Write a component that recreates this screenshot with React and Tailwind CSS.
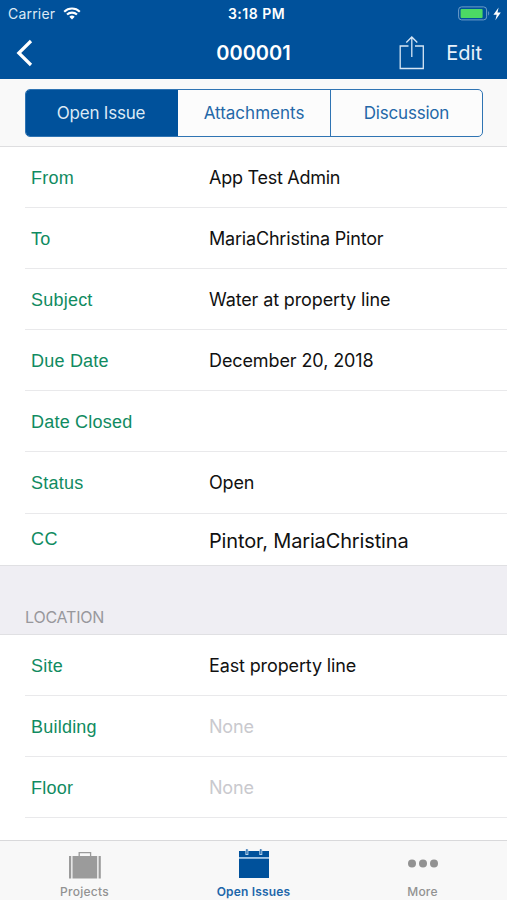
const details = [
  { label: 'From', value: 'App Test Admin', spacing: 'tracking-[-0.26px]' },
  { label: 'To', value: 'MariaChristina Pintor', spacing: 'tracking-[-0.19px]' },
  { label: 'Subject', value: 'Water at property line', spacing: 'tracking-[-0.13px]' },
  { label: 'Due Date', value: 'December 20, 2018', spacing: 'tracking-[-0.1px]' },
  { label: 'Date Closed', value: '', spacing: '' },
  { label: 'Status', value: 'Open', spacing: 'tracking-[-0.2px]' },
]

const location = [
  { label: 'Site', value: 'East property line', spacing: 'tracking-[-0.13px]' },
  { label: 'Building' },
  { label: 'Floor' },
]

function WifiIcon() {
  return (
    <svg width="18" height="13" viewBox="0 0 18 13" fill="none" stroke="white" strokeWidth="2.1">
      <path d="M1.2 4.7a11.2 11.2 0 0 1 15.6 0" />
      <path d="M4 7.6a7.2 7.2 0 0 1 10 0" />
      <path d="M9 12.6 6.3 9.8a3.9 3.9 0 0 1 5.4 0z" fill="white" stroke="none" />
    </svg>
  )
}

function BatteryIcon() {
  return (
    <svg width="44" height="16" viewBox="0 0 44 16">
      <rect x="0.6" y="0.9" width="28" height="13" rx="3" fill="none" stroke="#6e9dc9" strokeWidth="1" />
      <rect x="2.6" y="2.9" width="22" height="9" rx="1" fill="#4cd964" />
      <path d="M30.2 5.3c1.3.4 1.3 3.8 0 4.2z" fill="#6e9dc9" />
      <path d="M40.6 1.5 35.4 8.8h3.3l-1.3 5.4 5.4-7.6h-3.3z" fill="white" />
    </svg>
  )
}

function ShareIcon() {
  return (
    <svg width="26" height="34" viewBox="0 0 26 34" fill="none" stroke="#d6e6f5" strokeWidth="1.3">
      <path d="M9.5 10H1.2v22.5h23.1V10H16" />
      <path d="M12.8 21V1.3M7.3 6.5l5.5-5.5 5.5 5.5" />
    </svg>
  )
}

function BriefcaseIcon() {
  return (
    <svg width="34" height="30" viewBox="0 0 34 30" fill="#9b9b9b">
      <path d="M11.2 5V1.6h11.4V5" fill="none" stroke="#9b9b9b" strokeWidth="1.3" />
      <path d="M1 5h2.2v22.5H1zM4.5 5h24.7v22.5H4.5zM30.6 5h2.2v22.5h-2.2z" />
    </svg>
  )
}

function CalendarIcon() {
  return (
    <svg width="32" height="32" viewBox="0 0 32 32">
      <path d="M1 3h30v6H1zM1 10.5h30v19.6H1z" fill="#00519b" />
      <path d="M1 9h30v1.5H1z" fill="#9fc5e6" />
      <path d="M7.4 1.5h3v5.6h-3zM21.3 1.5h3v5.6h-3z" fill="#b5d2eb" />
      <path d="M8.3 0.9h1.2v5.2H8.3zM22.2 0.9h1.2v5.2h-1.2z" fill="#2669aa" />
    </svg>
  )
}

function Row({ label, value, spacing }) {
  return (
    <div className="ml-[25px] flex h-[61.1px] shrink-0 items-center border-b border-[#e9e9eb] pl-1.5 text-[18px]">
      <span className="w-[178px] pt-0.5 font-['Liberation_Sans',sans-serif] tracking-[0.22px] text-[#108b61]">{label}</span>
      {value === undefined ? (
        <span className="tracking-[-0.2px] text-[#c9c9ce]">None</span>
      ) : (
        <span className={`whitespace-nowrap text-[#111] ${spacing}`}>{value}</span>
      )}
    </div>
  )
}

export default function App() {
  return (
    <div className="flex h-[900px] w-[507px] flex-col overflow-hidden bg-white font-['Inter',sans-serif]">
      <header className="h-[79px] shrink-0 bg-[#00519b] text-white">
        <div className="grid h-[27px] grid-cols-3 items-center">
          <div className="flex items-center gap-2 pl-2 text-[14px] text-[#dce9f5]">
            <span className="tracking-[0.2px]">Carrier</span>
            <WifiIcon />
          </div>
          <span className="pl-1.5 text-center text-[14px] font-semibold tracking-[0.5px]">3:18 PM</span>
          <div className="flex justify-end pr-[5px]">
            <BatteryIcon />
          </div>
        </div>
        <div className="grid h-[52px] grid-cols-3 items-center">
          <svg className="ml-4" width="18" height="28" viewBox="0 0 18 28" fill="none" stroke="white" strokeWidth="3.2">
            <path d="M15 2 2.8 14 15 26" />
          </svg>
          <h1 className="text-center text-[20px] font-semibold">000001</h1>
          <div className="flex items-center justify-end gap-[21px] pr-[25px]">
            <ShareIcon />
            <span className="text-[20px] text-[#e8f1fa]">Edit</span>
          </div>
        </div>
      </header>

      <div className="h-[68px] shrink-0 border-b border-[#dedee0] bg-[#f9f9f9] px-[25px] pt-[9.5px]">
        <div className="grid h-[48px] w-[458px] grid-cols-3 overflow-hidden rounded-[5px] border border-[#2f74b3] bg-[#fcfcfc] text-[17px] text-[#2468a8]">
          <div className="flex items-center justify-center bg-[#00519b] pt-0.5 pr-0.5 tracking-[-0.2px] text-[#dce9f5]">Open Issue</div>
          <div className="flex items-center justify-center pt-0.5">Attachments</div>
          <div className="flex items-center justify-center border-l border-[#2f74b3] pt-0.5 tracking-[-0.2px]">Discussion</div>
        </div>
      </div>

      <main className="flex min-h-0 flex-1 flex-col overflow-hidden">
        {details.map((row) => (
          <Row key={row.label} {...row} />
        ))}
        <div className="flex h-[51.5px] shrink-0 items-center pl-[31px]">
          <span className="w-[178px] font-['Liberation_Sans',sans-serif] text-[18px] tracking-[0.4px] text-[#108b61]">CC</span>
          <span className="pt-[3px] text-[20px] tracking-[-0.15px] text-[#111]">Pintor, MariaChristina</span>
        </div>
        <div className="flex h-[70px] shrink-0 items-end border-y border-[#e0e0e3] bg-[#efeef3] pb-[5px] pl-[25px] text-[16px] tracking-[-0.2px] text-[#98989c]">
          LOCATION
        </div>
        {location.map((row) => (
          <Row key={row.label} {...row} />
        ))}
      </main>

      <nav className="grid h-[60px] shrink-0 grid-cols-3 border-t border-[#d9d9db] bg-[#f8f8f8] text-[12px] font-medium text-[#929292]">
        <div className="flex flex-col items-center gap-0.5 pt-2.5">
          <BriefcaseIcon />
          <span className="tracking-[0.25px]">Projects</span>
        </div>
        <div className="flex flex-col items-center gap-[3px] pt-[7px] font-semibold text-[#1d66aa]">
          <CalendarIcon />
          <span className="tracking-[0.18px]">Open Issues</span>
        </div>
        <div className="flex flex-col items-center gap-[15px] pt-[17px]">
          <svg width="30" height="10" viewBox="0 0 30 10" fill="#929292">
            <circle cx="4" cy="5.5" r="4" />
            <circle cx="15" cy="5.5" r="4" />
            <circle cx="26" cy="5.5" r="4" />
          </svg>
          <span className="tracking-[0.2px]">More</span>
        </div>
      </nav>
    </div>
  )
}
